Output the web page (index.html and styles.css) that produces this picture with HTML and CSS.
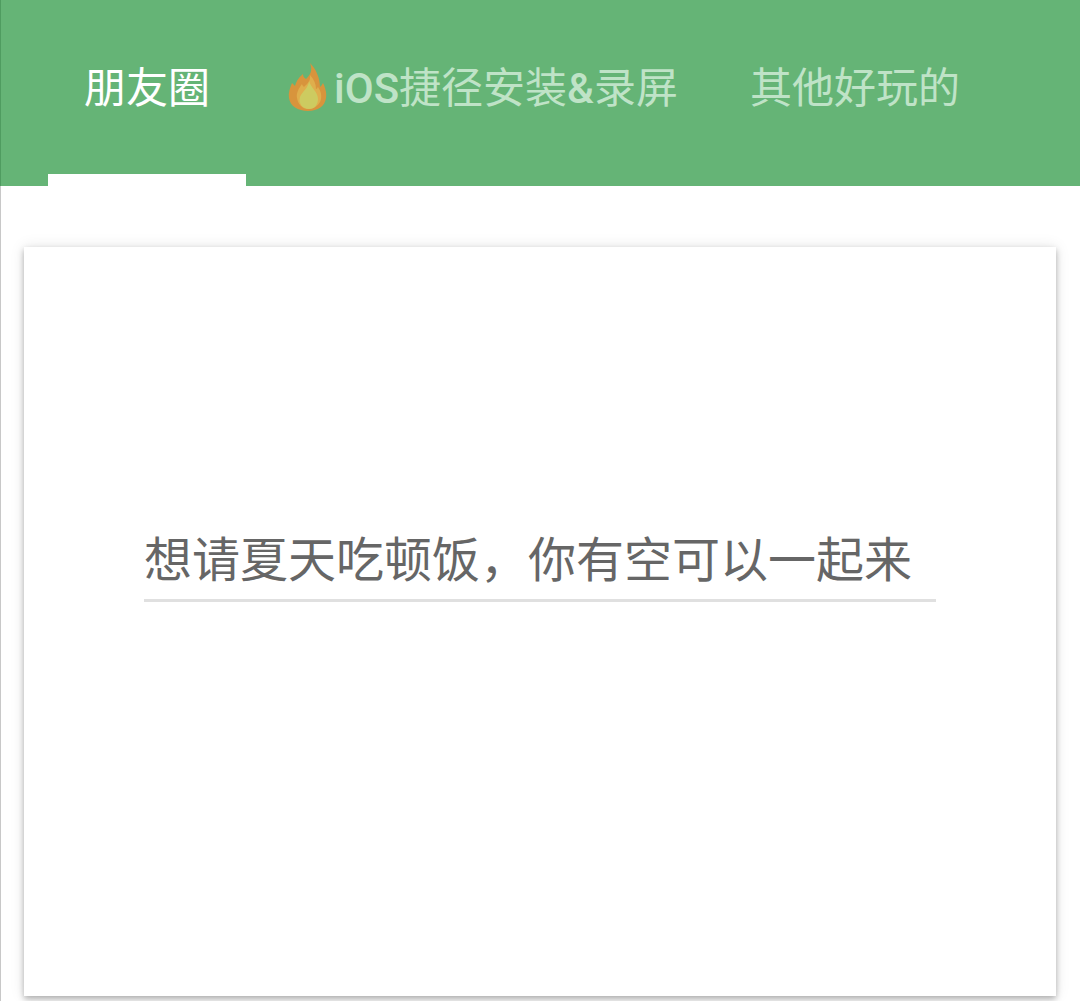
FILE: index.html
```html
<!DOCTYPE html>
<html lang="zh-CN">
<head>
  <meta charset="UTF-8" />
  <meta name="viewport" content="width=device-width, initial-scale=1.0" />
  <title>朋友圈</title>
  <link rel="stylesheet" href="styles.css">
</head>
<body>
  <div class="tabs">
    <a class="tab active" href="#">朋友圈</a>
    <a class="tab tab-ios" href="#">
      <svg class="flame" viewBox="0 0 40 48" width="40" height="48" aria-hidden="true">
        <path fill="#d8943c" d="M22 0c3 8 0 12-4 16-2-1-3-3-3-5-5 4-7 8-8 12-1-1-2-2-3-3-2 5-4 10-3 15 1 8 9 13 19 13s17-5 18-13c1-5-1-11-3-15-1 2-2 3-3 4 0-9-4-18-10-24z"/>
        <path fill="#dfae4c" d="M22 12c1 6-3 9-6 12-1-1-2-2-2-3-3 4-6 9-5 14 1 6 5 11 11 11s12-4 13-10c1-5-1-9-3-12-1 1-1 2-2 2 0-5-2-10-6-14z"/>
        <path fill="#cdcb60" d="M21 18c0 6-7 11-9 16-2 7 3 12 9 12s9-5 9-10c0-7-7-11-9-18z"/>
      </svg><span class="latin">iOS</span>捷径安装<span class="latin">&amp;</span>录屏
    </a>
    <a class="tab" href="#">其他好玩的</a>
  </div>
  <div class="content">
    <div class="card">
      <div class="field">想请夏天吃顿饭，你有空可以一起来</div>
    </div>
  </div>
</body>
</html>
```

FILE: styles.css
```css
* {
  margin: 0;
  padding: 0;
  box-sizing: border-box;
}
html, body {
  height: 100%;
}
body {
  font-family: Roboto, "Noto Sans CJK SC", sans-serif;
  background: #fff;
  display: flex;
  flex-direction: column;
  overflow: hidden;
}
.tabs {
  height: 186px;
  background: #65b476;
  border-left: 1px solid #4f9c60;
  padding-left: 47px;
  display: flex;
  flex-shrink: 0;
}
.tab {
  display: flex;
  align-items: center;
  height: 186px;
  padding: 4px 36px 0;
  font-size: 42px;
  line-height: 1;
  color: #bfe3c7;
  text-decoration: none;
  white-space: nowrap;
  border-bottom: 12px solid transparent;
}
.tab.active {
  color: #fff;
  border-bottom-color: #fff;
}
.latin {
  font-weight: 500;
}
.flame {
  margin: -5px 6px 0 6px;
  flex-shrink: 0;
}
.content {
  flex: 1;
  border-left: 1px solid #c8c8c8;
  padding: 61px 24px 5px 23px;
  display: flex;
}
.card {
  flex: 1;
  background: #fff;
  box-shadow: 0 3px 6px rgba(0, 0, 0, 0.28), 0 0 14px rgba(0, 0, 0, 0.1);
  display: flex;
  align-items: center;
  justify-content: center;
}
.field {
  width: 792px;
  margin-bottom: 108px;
  padding: 0 0 10px 0;
  font-size: 48px;
  line-height: 56px;
  color: #666;
  border-bottom: 3px solid #e0e0e0;
}
```
